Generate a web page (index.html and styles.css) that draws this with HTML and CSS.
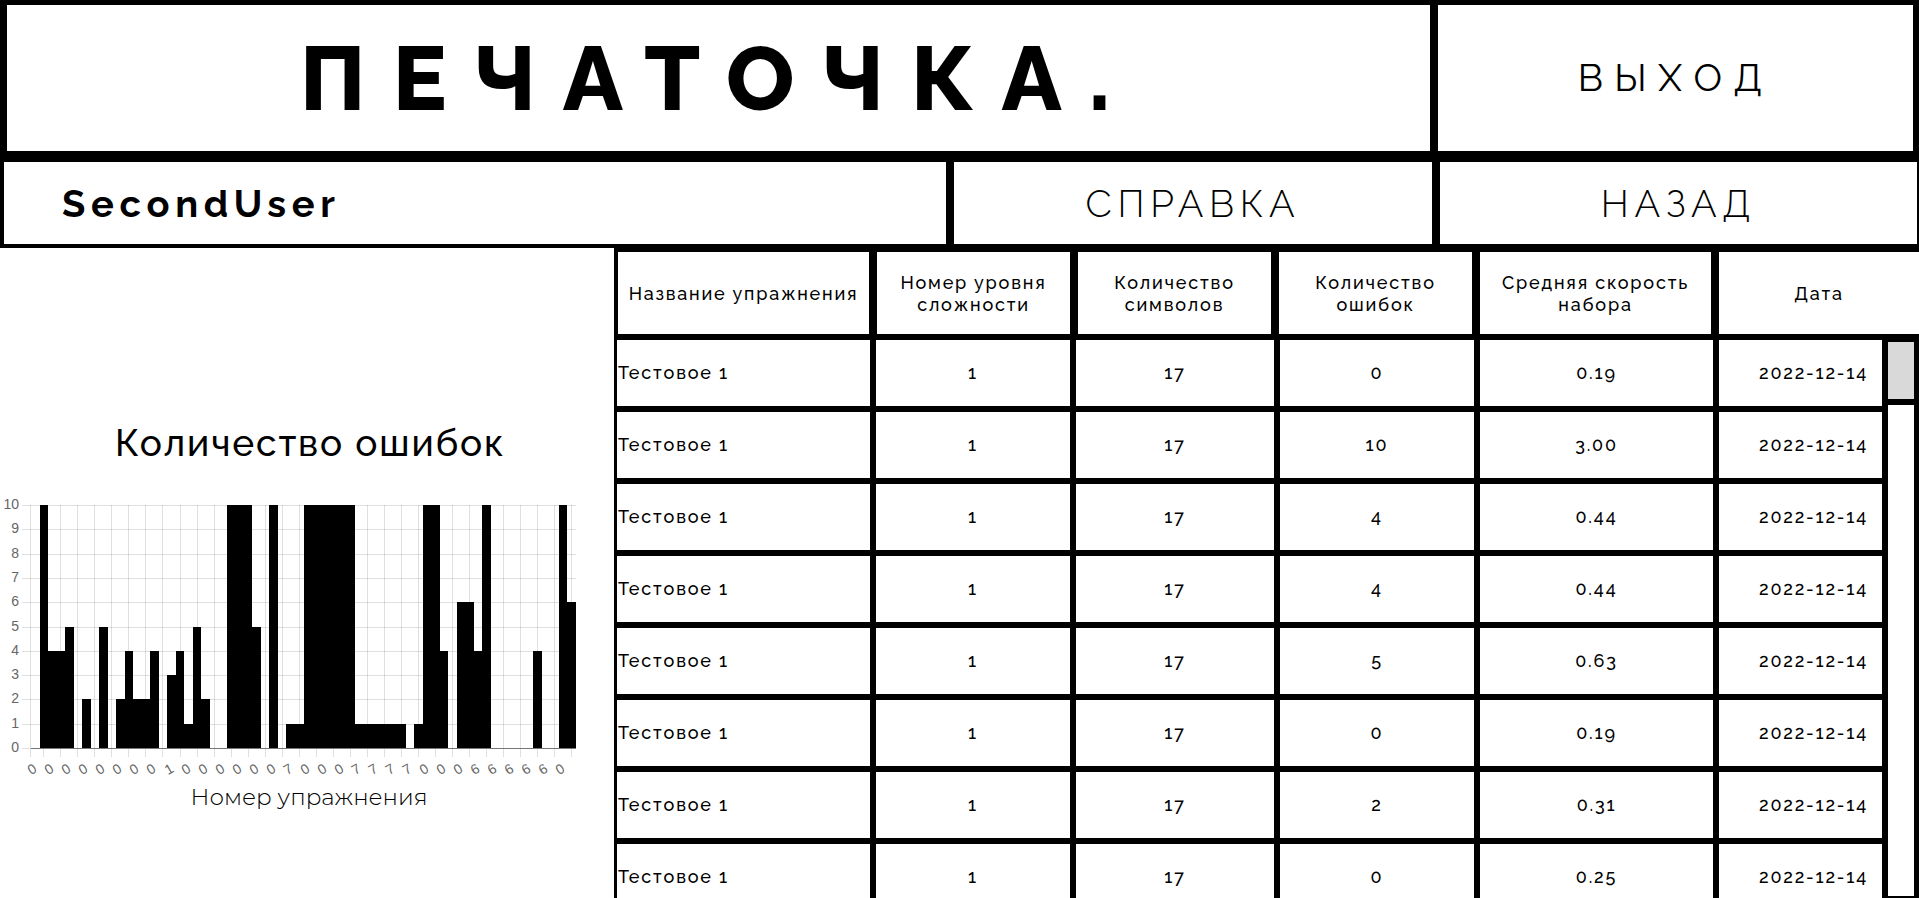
FILE: index.html
```html
<!DOCTYPE html>
<html lang="ru">
<head>
<meta charset="utf-8">
<title>Печаточка</title>
<link rel="stylesheet" href="styles.css">
</head>
<body>
<header class="top">
  <h1 class="brand">ПЕЧАТОЧКА.</h1>
  <button class="exit" type="button">ВЫХОД</button>
</header>
<nav class="bar">
  <div class="user">SecondUser</div>
  <a class="link" href="#help">СПРАВКА</a>
  <a class="link" href="#back">НАЗАД</a>
</nav>
<main class="content">
  <section class="stats">
    <h2 class="stats-title">Количество ошибок</h2>
    <svg class="chart" id="chart" viewBox="0 0 614 284" role="img" aria-label="Количество ошибок"></svg>
    <p class="stats-axis">Номер упражнения</p>
  </section>
  <section class="results">
    <table class="table">
      <thead class="head">
        <tr>
          <th scope="col">Название упражнения</th>
          <th scope="col">Номер уровня сложности</th>
          <th scope="col">Количество символов</th>
          <th scope="col">Количество ошибок</th>
          <th scope="col">Средняя скорость набора</th>
          <th scope="col">Дата</th>
        </tr>
      </thead>
      <tbody class="rows">
        <tr><td>Тестовое 1</td><td>1</td><td>17</td><td>0</td><td>0.19</td><td>2022-12-14</td></tr>
        <tr><td>Тестовое 1</td><td>1</td><td>17</td><td>10</td><td>3.00</td><td>2022-12-14</td></tr>
        <tr><td>Тестовое 1</td><td>1</td><td>17</td><td>4</td><td>0.44</td><td>2022-12-14</td></tr>
        <tr><td>Тестовое 1</td><td>1</td><td>17</td><td>4</td><td>0.44</td><td>2022-12-14</td></tr>
        <tr><td>Тестовое 1</td><td>1</td><td>17</td><td>5</td><td>0.63</td><td>2022-12-14</td></tr>
        <tr><td>Тестовое 1</td><td>1</td><td>17</td><td>0</td><td>0.19</td><td>2022-12-14</td></tr>
        <tr><td>Тестовое 1</td><td>1</td><td>17</td><td>2</td><td>0.31</td><td>2022-12-14</td></tr>
        <tr><td>Тестовое 1</td><td>1</td><td>17</td><td>0</td><td>0.25</td><td>2022-12-14</td></tr>
      </tbody>
    </table>
    <div class="track"><div class="thumb"></div></div>
  </section>
</main>
<script src="chart.js"></script>
</body>
</html>
```
FILE: styles.css
```css
* {
  box-sizing: border-box;
}

body {
  margin: 0;
  height: 100vh;
  display: flex;
  flex-direction: column;
  overflow: hidden;
  background: #fff;
  color: #000;
  font-family: Raleway, Lato, "Open Sans", sans-serif;
}

.top {
  flex: none;
  display: grid;
  grid-template-columns: 1423fr 475fr;
  gap: 8px;
  padding: 5px 6px 6px 7px;
  background: #000;
}

.brand,
.exit {
  display: flex;
  align-items: center;
  justify-content: center;
  min-height: 146px;
  margin: 0;
  background: #fff;
}

.brand {
  font-size: 90px;
  font-weight: 800;
  line-height: 106px;
  letter-spacing: 0.3em;
}

.exit {
  padding: 0 0 2px;
  border: 0;
  color: #000;
  font-family: inherit;
  font-size: 38px;
  font-weight: 400;
  letter-spacing: 0.3em;
}

.bar {
  flex: none;
  display: grid;
  grid-template-columns: 942fr 478fr 477fr;
  gap: 8px;
  padding: 5px 2px 4px 4px;
  background: #000;
}

.user,
.link {
  display: flex;
  align-items: center;
  min-height: 82px;
  background: #fff;
  font-size: 38px;
  letter-spacing: 0.15em;
}

.user {
  padding-left: 58px;
  font-weight: 700;
}

.link {
  justify-content: center;
  color: #000;
  font-weight: 300;
  text-decoration: none;
}

.content {
  flex: 1;
  min-height: 0;
  display: grid;
  grid-template-columns: 614fr 1305fr;
}

.stats {
  display: flex;
  flex-direction: column;
  align-items: center;
  padding-top: 173px;
}

.stats-title {
  margin: 0 0 31px;
  padding-left: 6px;
  font-size: 37px;
  font-weight: 500;
  line-height: 44px;
  letter-spacing: 0.05em;
}

.chart {
  display: block;
  width: 100%;
}

.chart .grid {
  stroke: rgba(0, 0, 0, 0.12);
  stroke-width: 1;
  shape-rendering: crispEdges;
}

.chart .base {
  stroke: #777;
  shape-rendering: crispEdges;
}

.chart text {
  fill: #666;
  font-family: "Liberation Sans", Arial, sans-serif;
  font-size: 14px;
}

.stats-axis {
  margin: 4px 0 0;
  padding-left: 4px;
  font-family: Montserrat, Lato, sans-serif;
  font-size: 23px;
  font-weight: 300;
  line-height: 26px;
}

.results {
  position: relative;
  min-width: 0;
  overflow: hidden;
}

.table,
.head,
.rows {
  display: block;
}

.table {
  font-size: 18px;
  font-weight: 500;
  line-height: 22px;
  letter-spacing: 0.1em;
}

.table tr {
  display: grid;
}

.head tr {
  grid-template-columns: 259fr 201fr 201fr 201fr 239fr 204fr;
  border-top: 4px solid #000;
  border-bottom: 3px solid #000;
}

.rows {
  margin-right: 31px;
}

.rows tr {
  grid-template-columns: 259fr 200fr 204fr 200fr 239fr 172fr;
}

.table th,
.table td {
  display: flex;
  align-items: center;
  justify-content: center;
  min-width: 0;
  text-align: center;
}

.table th {
  min-height: 82px;
  padding: 2px 8px 0;
  border: solid #000;
  border-width: 0 4px;
  font-weight: 500;
}

.table th:last-child {
  border-right: 0;
}

.table td {
  min-height: 72px;
  border: 3px solid #000;
}

.table td:first-child {
  justify-content: flex-start;
}

.table td:last-child {
  justify-content: flex-end;
  padding-right: 14px;
  border-right-width: 6px;
}

/* Scroll track beside the rows */
.track {
  position: absolute;
  top: 88px;
  right: 0;
  bottom: 0;
  width: 37px;
  border: solid #000;
  border-width: 6px 5px 2px 6px;
}

.thumb {
  height: 63px;
  border-bottom: 6px solid #000;
  background: #d9d9d9;
}
```
FILE: chart.js
```js
const errors = [
  0, 10, 4, 4, 5, 0, 2, 0, 5, 0, 2, 4, 2, 2, 4, 0,
  3, 4, 1, 5, 2, 0, 0, 10, 10, 10, 5, 0, 10, 0, 1, 1,
  10, 10, 10, 10, 10, 10, 1, 1, 1, 1, 1, 1, 0, 1, 10, 10,
  4, 0, 6, 6, 4, 10, 0, 0, 0, 0, 0, 4, 0, 0, 10, 6
];
const labels = "00000000100000070007777000666660";

const svg = document.getElementById("chart");
const left = 31, right = 576, top0 = 9, bottom = 252;
const step = (right - left) / errors.length;

function add(name, attrs, text) {
  const el = document.createElementNS("http://www.w3.org/2000/svg", name);
  for (const key in attrs) el.setAttribute(key, attrs[key]);
  if (text !== undefined) el.textContent = text;
  svg.appendChild(el);
}
function yOf(v) {
  return Math.round(bottom - v * (bottom - top0) / 10);
}

for (let v = 0; v <= 10; v++) {
  const y = yOf(v);
  add("line", { class: "grid", x1: 22, x2: right, y1: y + 0.5, y2: y + 0.5 });
  add("text", { x: 19, y: y + 4, "text-anchor": "end" }, v);
}
add("line", { class: "grid", x1: left - 0.5, x2: left - 0.5, y1: top0, y2: bottom + 9 });
[...labels].forEach((label, k) => {
  const x = Math.floor(left + (2 * k + 1.5) * step) + 0.5;
  add("line", { class: "grid", x1: x, x2: x, y1: top0, y2: bottom + 9 });
  const lx = Math.round(x - 12);
  add("text", { x: lx, y: bottom + 26, "text-anchor": "middle", transform: `rotate(-30 ${lx} ${bottom + 21})` }, label);
});
errors.forEach((v, i) => {
  const x = Math.round(left + i * step);
  const end = Math.round(left + (i + 1) * step);
  add("rect", { x, y: yOf(v), width: end - x, height: bottom - yOf(v) });
});
add("line", { class: "base", x1: left, x2: right, y1: bottom + 0.5, y2: bottom + 0.5 });
```
